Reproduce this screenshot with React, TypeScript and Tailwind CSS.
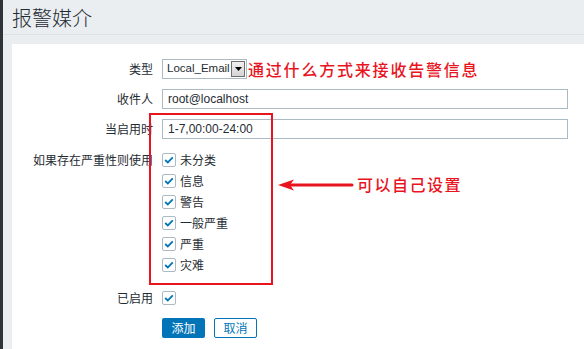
import React from "react";

const cjk = "font-['Noto_Sans_CJK_SC','Noto_Sans',sans-serif]";

function Check() {
  return (
    <span className="w-[14px] h-[14px] border border-[#acbbc3] rounded-[2px] bg-white flex items-center justify-center shrink-0">
      <svg width="10" height="8" viewBox="0 0 10 8">
        <path d="M1.2 4 L3.8 6.4 L8.8 1.4" fill="none" stroke="#0275b8" strokeWidth="1.8" />
      </svg>
    </span>
  );
}

export default function App() {
  const sev = ["未分类", "信息", "警告", "一般严重", "严重", "灾难"];
  return (
    <div className={`w-[584px] h-[349px] bg-[#ebeef0] flex overflow-hidden relative ${cjk} text-[12px] text-[#1f2c33]`}>
      <div className="w-[3px] bg-[#2f3438] shrink-0" />
      <div className="flex-1 flex flex-col">
        <div className="h-[35px] border-b border-[#dde2e5] pl-[9px] flex items-center">
          <span className="text-[20px] leading-none text-[#1f2c33] mt-[1px] font-light">报警媒介</span>
        </div>
        <div className="mt-[9px] ml-[9px] flex-1 bg-white pt-[15px]">
          <div className="flex items-center h-[20px]">
            <div className="w-[141px] text-right">类型</div>
            <div className="ml-[9px] w-[85px] h-[20px] border border-[#acbbc3] flex items-center font-['Liberation_Sans',sans-serif] shrink-0">
              <span className="pl-[4px] flex-1 whitespace-nowrap overflow-hidden text-[11.5px]">Local_Email</span>
              <span className="w-[14px] h-[16px] mr-[1px] shrink-0 border border-[#6f6f6f] bg-gradient-to-b from-[#f0f0f0] to-[#d4d4d4] flex items-center justify-center">
                <svg width="7" height="4" viewBox="0 0 7 4"><path d="M0 0 H7 L3.5 4 Z" fill="#000" /></svg>
              </span>
            </div>
            <span className="ml-[1px] text-[16px] tracking-[1.8px] text-[#e8151f] font-medium leading-none whitespace-nowrap">通过什么方式来接收告警信息</span>
          </div>
          <div className="flex items-center h-[20px] mt-[10px]">
            <div className="w-[141px] text-right">收件人</div>
            <div className="ml-[9px] w-[406px] h-[20px] border border-[#acbbc3] flex items-center pl-[5px] font-['Liberation_Sans',sans-serif]">root@localhost</div>
          </div>
          <div className="flex items-center h-[20px] mt-[10px]">
            <div className="w-[141px] text-right">当启用时</div>
            <div className="ml-[9px] w-[406px] h-[20px] border border-[#acbbc3] flex items-center pl-[5px] font-['Liberation_Sans',sans-serif]">1-7,00:00-24:00</div>
          </div>
          <div className="flex mt-[10px]">
            <div className="w-[141px] text-right leading-[21px]">如果存在严重性则使用</div>
            <div className="ml-[9px] flex flex-col">
              {sev.map((s) => (
                <div key={s} className="h-[21px] flex items-center gap-[4px]">
                  <Check />
                  <span>{s}</span>
                </div>
              ))}
            </div>
          </div>
          <div className="flex items-center h-[21px] mt-[12px]">
            <div className="w-[141px] text-right">已启用</div>
            <div className="ml-[9px]"><Check /></div>
          </div>
          <div className="flex items-center h-[20px] mt-[10px] pl-[150px] gap-[9px]">
            <button className="w-[43px] h-[20px] bg-[#0275b8] text-white rounded-[2px] text-[12px]">添加</button>
            <button className="w-[43px] h-[20px] border border-[#0275b8] text-[#0275b8] bg-white rounded-[2px] text-[12px]">取消</button>
          </div>
        </div>
      </div>
      <div className="absolute left-[149px] top-[113px] w-[124px] h-[172px] border-2 border-[#e8151f]" />
      <svg className="absolute left-[276px] top-[178px]" width="80" height="14" viewBox="0 0 80 14">
        <path d="M14 7 H76" stroke="#e8151f" strokeWidth="3" strokeLinecap="round" />
        <path d="M2 7 L18 1.5 L14 7 L18 12.5 Z" fill="#e8151f" />
      </svg>
      <span className="absolute left-[357px] top-[176px] text-[16px] tracking-[1.5px] text-[#e8151f] font-medium leading-none">可以自己设置</span>
    </div>
  );
}
